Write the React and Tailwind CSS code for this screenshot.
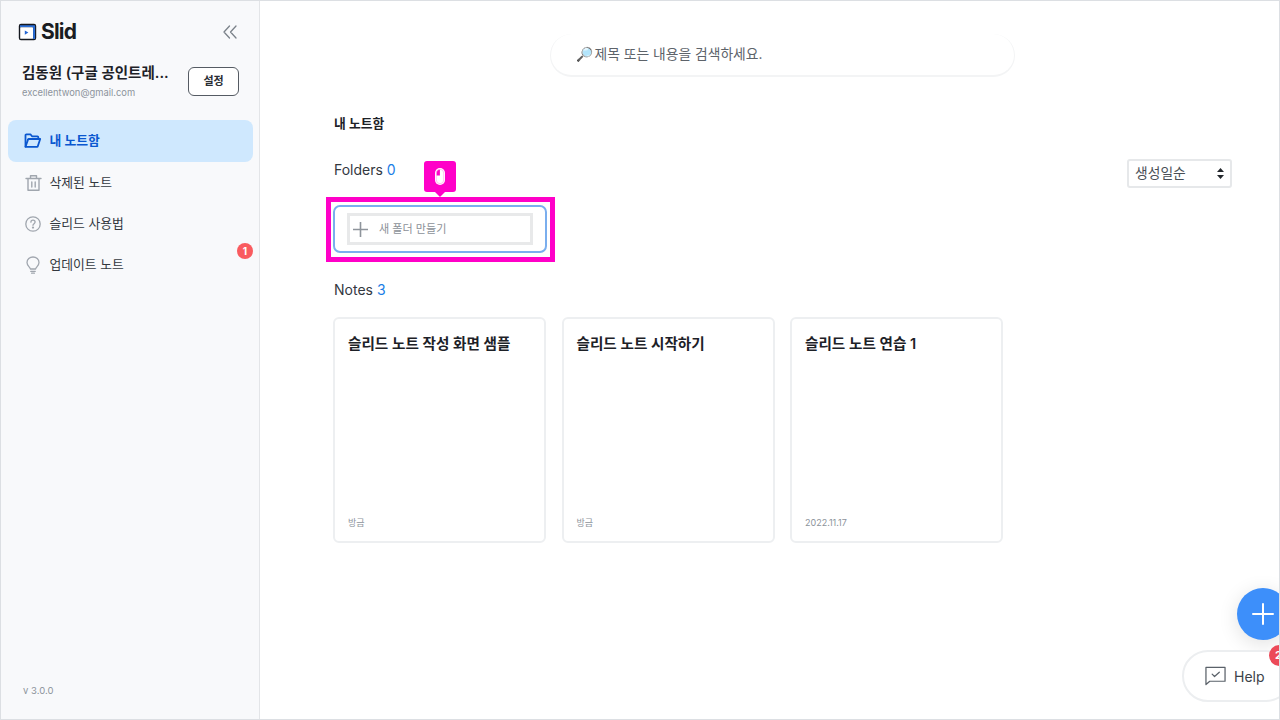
import React from "react";

function Folder() {
  return (
    <svg width="18" height="18" viewBox="0 0 18 18" fill="none" stroke="#0a57d0" strokeWidth="1.8" strokeLinejoin="round" strokeLinecap="round">
      <path d="M1.500 14.500V3.200c0-.5.4-.9.9-.9h4l1.600 2h5.400c.5 0 .9.4.9.9v1.600" />
      <path d="M1.500 14.800 4 7.600c.1-.4.4-.6.8-.6h11.400l-2.400 7.200c-.1.4-.4.6-.8.6H1.500z" />
    </svg>
  );
}
function Trash() {
  return (
    <svg width="17" height="18" viewBox="0 0 17 18" fill="none" stroke="#a0a6ae" strokeWidth="1.4" strokeLinecap="round" strokeLinejoin="round">
      <path d="M1 4.500h15" />
      <path d="M5.500 4.200V1.800h6v2.400" />
      <path d="M3 4.800v11.400h11V4.800" />
      <path d="M6.800 8v5M10.200 8v5" />
    </svg>
  );
}
function Help() {
  return (
    <svg width="16" height="16" viewBox="0 0 16 16" fill="none" stroke="#a0a6ae" strokeWidth="1.3" strokeLinecap="round">
      <circle cx="8" cy="8" r="7.200" />
      <path d="M5.900 6.200c0-1.200 1-2 2.100-2s2.100.8 2.100 1.900c0 1.500-2.100 1.600-2.100 3.200" />
      <circle cx="8" cy="11.600" r=".5" fill="#a0a6ae" />
    </svg>
  );
}
function Bulb() {
  return (
    <svg width="14" height="18" viewBox="0 0 14 18" fill="none" stroke="#a0a6ae" strokeWidth="1.3" strokeLinecap="round" strokeLinejoin="round">
      <path d="M4.400 13C4 10.800 1 9.800 1 6.600 1 3.400 3.700 1 7 1s6 2.400 6 5.600c0 3.200-3 4.200-3.400 6.400z" />
      <path d="M4.800 15.400h4.400M5.600 17.200h2.800" />
    </svg>
  );
}
function Logo() {
  return (
    <svg width="19" height="18" viewBox="0 0 19 18" fill="none">
      <rect x="0.800" y="0.800" width="17.400" height="16.400" rx="2.200" fill="#14181f" />
      <path d="M2 2.200h14.500c.4 0 .6.200.6.600V16h-2V4.200H2z" fill="#2b6fd8" />
      <rect x="2.200" y="4.200" width="12.800" height="11.600" rx="0.600" fill="#fff" />
      <path d="M6.800 7.400v4.400l3.600-2.200z" fill="#2466d4" />
    </svg>
  );
}

function NavItem({ icon, label, active, badge }) {
  return (
    <div className={`relative flex items-center rounded-lg pl-[16px] ${active ? "h-[42px] bg-[#cfe8fe]" : "h-[41px]"}`}>
      <div className="w-[18px] flex justify-center">{icon}</div>
      <span className={`ml-[7.500px] text-[12.800px] ${active ? "font-semibold text-[#0a57d0]" : "text-[#33383f]"}`}>{label}</span>
      {badge && (
        <span className="absolute right-0 top-[-1px] w-[16px] h-[16px] rounded-full bg-[#f95b5f] text-white text-[10px] font-bold flex items-center justify-center">{badge}</span>
      )}
    </div>
  );
}

function NoteCard({ title, date }) {
  return (
    <div className="w-[213px] h-[226px] rounded-md border-2 border-[#edeff1] bg-white px-[13px] pt-[15px] pb-[12px] flex flex-col justify-between">
      <div className="text-[14.600px] font-semibold text-[#1d2127]">{title}</div>
      <div className="text-[9px] text-[#8c939b]">{date}</div>
    </div>
  );
}

export default function App() {
  return (
    <div
      className="relative w-[1280px] h-[720px] overflow-hidden bg-white flex border border-[#dcdfe3]"
      style={{ fontFamily: '"Inter","Noto Sans CJK KR",sans-serif' }}
    >
      <aside className="w-[259px] shrink-0 bg-[#f8f9fb] border-r border-[#e3e5e8] flex flex-col pl-[7px] pr-[6px]">
        <div className="flex items-center justify-between pt-[20px] pl-[10px] pr-[16px]">
          <div className="flex items-center gap-[4px]">
            <Logo />
            <span className="text-[21px] font-bold tracking-[-0.8px] text-[#1a1d22] leading-[22px]">Slid</span>
          </div>
          <svg width="14" height="14" viewBox="0 0 14 14" fill="none" stroke="#7b828a" strokeWidth="1.300" strokeLinecap="round" strokeLinejoin="round">
            <path d="M6.500 1 1 7l5.500 6M13 1 7.500 7l5.500 6" />
          </svg>
        </div>
        <div className="flex items-start justify-between pt-[20px] pl-[14px] pr-[14px]">
          <div className="min-w-0">
            <div className="text-[14.500px] font-semibold leading-[20px] text-[#1d2127]">김동원 (구글 공인트레...</div>
            <div className="text-[9.400px] leading-[14px] mt-[3px] text-[#8d949c]">excellentwon@gmail.com</div>
          </div>
          <div className="w-[51px] h-[29px] mt-[4px] rounded-md border border-[#555b63] bg-white text-[11px] font-semibold text-[#2a2e34] flex items-center justify-center">설정</div>
        </div>
        <nav className="mt-[20px] flex flex-col">
          <NavItem active icon={<Folder />} label="내 노트함" />
          <NavItem icon={<Trash />} label="삭제된 노트" />
          <NavItem icon={<Help />} label="슬리드 사용법" />
          <NavItem icon={<Bulb />} label="업데이트 노트" badge="1" />
        </nav>
        <div className="mt-auto pl-[15px] pb-[21px] text-[9.500px] text-[#8d949c]">v 3.0.0</div>
      </aside>

      <main className="flex-1 min-w-0 pl-[74px] pr-[47px] flex flex-col">
        <div className="self-center ml-[-2px] mt-[33px] w-[465px] h-[43px] rounded-[22px] bg-white border-b-2 border-r border-l border-[#f3f4f5] flex items-center pl-[25px] text-[13.800px] text-[#5d636a]">
          🔎 <span className="ml-[2px]">제목 또는 내용을 검색하세요.</span>
        </div>
        <div className="mt-[38px] text-[12.800px] font-semibold text-[#1d2127] leading-[18px]">내 노트함</div>
        <div className="flex items-start justify-between mt-[27px]">
          <div className="text-[14px] text-[#33383f] leading-[20px]">Folders <span className="text-[#1a7de6]">0</span></div>
          <div className="w-[105px] h-[29px] mt-[-1px] rounded-[3px] border-2 border-[#e6e8ea] bg-white flex items-center justify-between pl-[6px] pr-[6px] text-[13.800px] text-[#4a4f56]">
            <span>생성일순</span>
            <svg width="7" height="11" viewBox="0 0 7 11" fill="#23272c"><path d="M3.500 0 7 4H0zM3.500 11 0 7h7z" /></svg>
          </div>
        </div>

        <div className="relative mt-[9px] ml-[-8px] w-[229px] h-[65px] border-[5px] border-[#ff00c8]">
          <div className="ml-[2px] mt-[3px] w-[214px] h-[48px] rounded-[7px] border-2 border-[#7aaeee] pl-[12px] pt-[6px]">
            <div className="w-[186px] h-[32px] border-[3px] border-[#e8e9ea] flex items-center pl-[3px]">
              <svg width="15" height="15" viewBox="0 0 15 15" stroke="#8e949b" strokeWidth="1.600"><path d="M7.500 0v15M0 7.500h15" /></svg>
              <span className="ml-[11px] text-[11.100px] text-[#8c9198]">새 폴더 만들기</span>
            </div>
          </div>
          <div className="absolute left-[93px] top-[-41px] w-[32px] h-[31px] rounded-[3px] bg-[#ff00c8] flex items-center justify-center">
            <svg width="12" height="19" viewBox="0 0 12 19" fill="none">
              <rect x="1" y="1" width="10" height="17" rx="5" fill="#fff" />
              <path d="M2.500 8.500V6a3.400 3.400 0 0 1 3.400-3.500v6z" fill="#ff00c8" />
              <rect x="2.300" y="2.300" width="7.400" height="14.400" rx="3.700" stroke="#ff9be8" strokeWidth="0.600" />
            </svg>
            <div className="absolute left-[11px] bottom-[-5px] w-0 h-0 border-l-[5px] border-r-[5px] border-t-[5px] border-l-transparent border-r-transparent border-t-[#ff00c8]" />
          </div>
        </div>

        <div className="mt-[18px] text-[14px] text-[#33383f] leading-[20px]">Notes <span className="text-[#1a7de6]">3</span></div>
        <div className="mt-[17px] ml-[-1px] flex gap-[15.500px]">
          <NoteCard title="슬리드 노트 작성 화면 샘플" date="방금" />
          <NoteCard title="슬리드 노트 시작하기" date="방금" />
          <NoteCard title="슬리드 노트 연습 1" date="2022.11.17" />
        </div>
      </main>

      <div className="absolute left-[1236px] top-[587px] w-[52px] h-[52px] rounded-full bg-[#3d8ffa] shadow-[0_4px_20px_rgba(0,0,0,0.12)] flex items-center justify-center">
        <svg width="22" height="22" viewBox="0 0 22 22" stroke="#fff" strokeWidth="2" strokeLinecap="round"><path d="M11 1v20M1 11h20" /></svg>
      </div>
      <div className="absolute left-[1181px] top-[649px] w-[110px] h-[52px] rounded-full bg-white border-2 border-[#eceef0] flex items-center pl-[21px]">
        <svg width="21" height="20" viewBox="0 0 22 20" fill="none" stroke="#5a6169" strokeWidth="1.300" strokeLinejoin="round" strokeLinecap="round">
          <path d="M1 1h20v14.500H5L1 19z" />
          <path d="M7.500 8l2.500 2.500L15 6" />
        </svg>
        <span className="ml-[8px] text-[14px] text-[#3c4249]">Help</span>
      </div>
      <div className="absolute left-[1268px] top-[644px] w-[21px] h-[21px] rounded-full bg-[#ec4a59] text-white text-[11px] font-bold flex items-center pl-[6px]">2</div>
    </div>
  );
}
